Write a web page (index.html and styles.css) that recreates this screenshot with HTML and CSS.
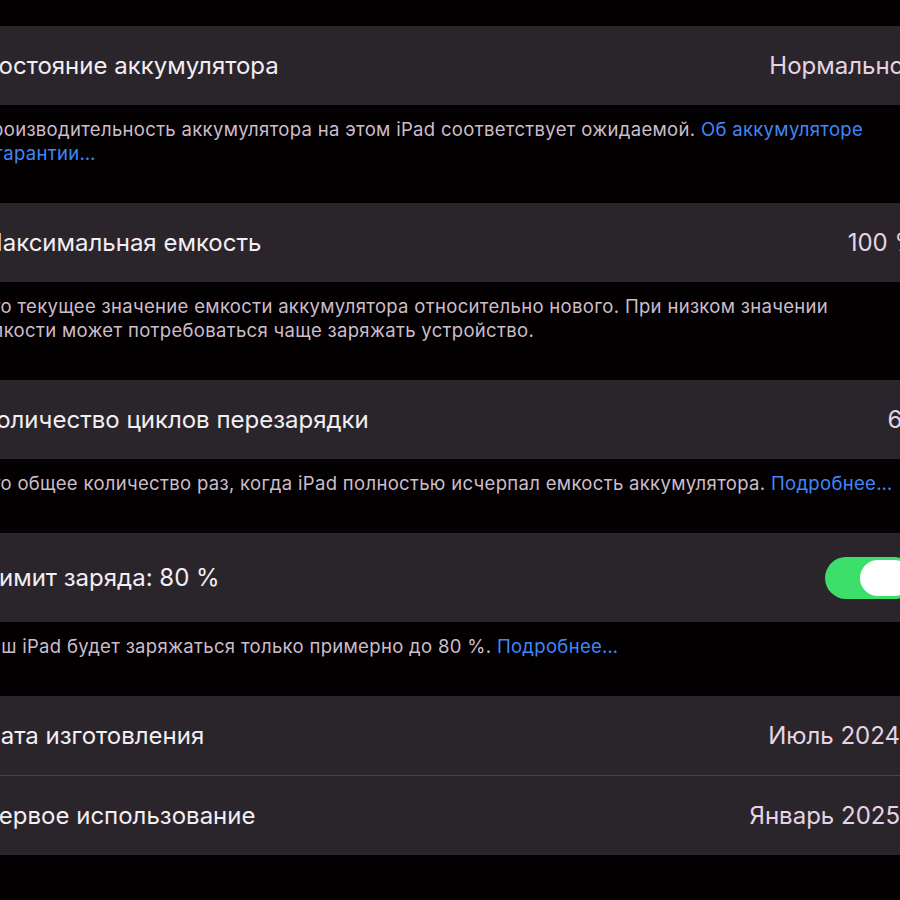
FILE: index.html
```html
<!DOCTYPE html>
<html lang="ru">
<head>
<meta charset="utf-8">
<title>Состояние аккумулятора</title>
<link rel="stylesheet" href="styles.css">
</head>
<body>
<main class="list">
  <section class="group">
    <div class="cell">
      <span class="title">Состояние аккумулятора</span>
      <span class="value value--far">Нормальное</span>
    </div>
  </section>
  <p class="footer">Производительность аккумулятора на этом iPad соответствует ожидаемой. <a class="link">Об аккумуляторе и&nbsp;гарантии…</a></p>

  <section class="group">
    <div class="cell">
      <span class="title">Максимальная емкость</span>
      <span class="value value--far">100 %</span>
    </div>
  </section>
  <p class="footer">Это текущее значение емкости аккумулятора относительно нового. При низком значении емкости может потребоваться чаще заряжать устройство.</p>

  <section class="group">
    <div class="cell">
      <span class="title">Количество циклов перезарядки</span>
      <span class="value value--mid">65</span>
    </div>
  </section>
  <p class="footer">Это общее количество раз, когда iPad полностью исчерпал емкость аккумулятора. <a class="link">Подробнее…</a></p>

  <section class="group">
    <div class="cell cell--tall">
      <span class="title">Лимит заряда: 80 %</span>
      <span class="switch" role="switch" aria-checked="true"><span class="knob"></span></span>
    </div>
  </section>
  <p class="footer">Ваш iPad будет заряжаться только примерно до 80 %. <a class="link">Подробнее…</a></p>

  <section class="group">
    <div class="cell">
      <span class="title">Дата изготовления</span>
      <span class="value">Июль 2024</span>
    </div>
    <div class="cell cell--sep">
      <span class="title">Первое использование</span>
      <span class="value">Январь 2025</span>
    </div>
  </section>
</main>
</body>
</html>
```

FILE: styles.css
```css
html, body {
  margin: 0;
  padding: 0;
  background: #020001;
  overflow: hidden;
}

body {
  width: 900px;
  height: 900px;
  font-family: Inter, "Noto Sans", "DejaVu Sans", sans-serif;
  -webkit-font-smoothing: antialiased;
}

.list {
  margin: 0 -60px 0 -40px;
  padding-top: 26px;
}

.group {
  background: #2a252b;
}

.cell {
  display: flex;
  align-items: center;
  justify-content: space-between;
  height: 79px;
  padding: 0 60px 0 21px;
  box-sizing: border-box;
}

.cell--tall {
  height: 89px;
}

.cell--sep {
  height: 80px;
  border-top: 1px solid #48434a;
}

.title {
  font-size: 24px;
  color: #f3eef3;
  letter-spacing: 0;
  white-space: nowrap;
}

.value {
  font-size: 24px;
  color: #e6d4e3;
  white-space: nowrap;
}

.value--far {
  margin-right: -18px;
}

.value--mid {
  margin-right: -17px;
}

.footer {
  margin: 0;
  padding: 12px 60px 38px 18px;
  font-size: 18.5px;
  line-height: 24px;
  color: #cdbdca;
  letter-spacing: 0.32px;
}

.link {
  color: #4186f8;
}

.switch {
  display: flex;
  align-items: center;
  width: 90px;
  height: 42px;
  margin-right: -15px;
  border-radius: 21px;
  background: #3ddf6b;
  box-sizing: border-box;
  padding-left: 35px;
}

.knob {
  width: 52px;
  height: 36px;
  border-radius: 18px;
  background: #ffffff;
}
```
